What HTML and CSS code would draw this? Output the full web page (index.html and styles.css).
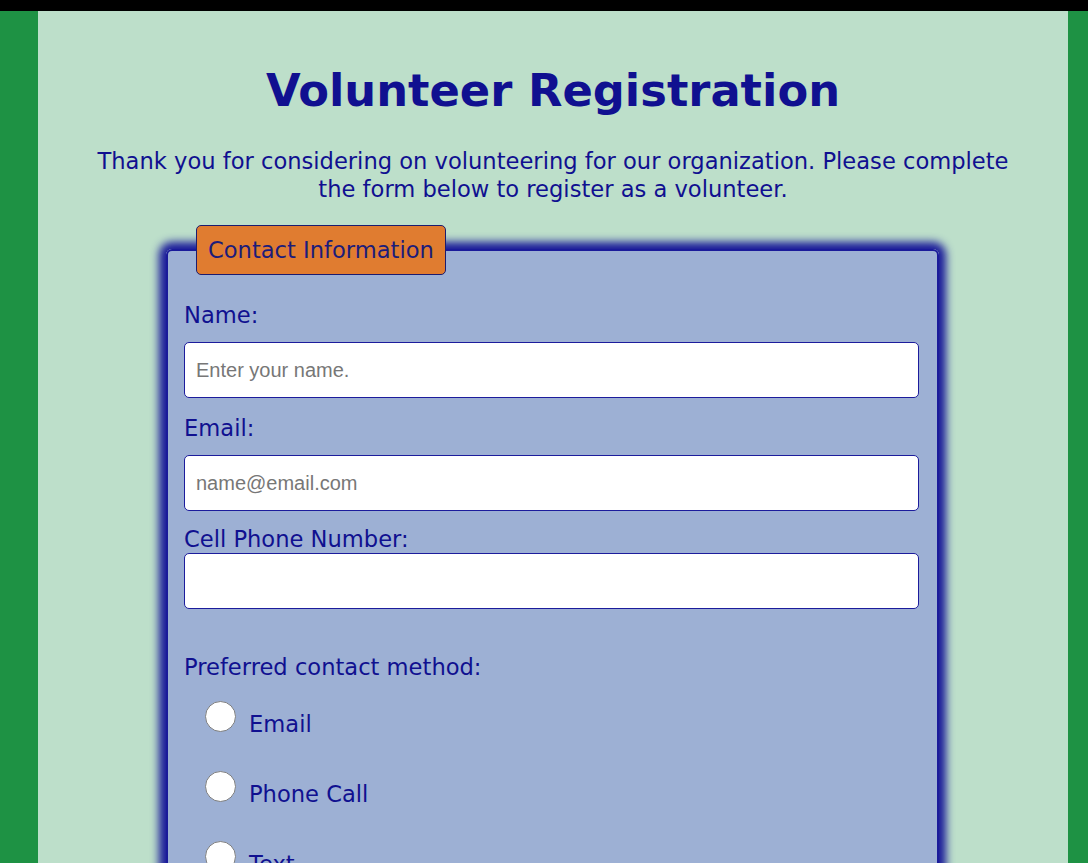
FILE: index.html
```html
<!DOCTYPE html>
<html lang="en">
<head>
<meta charset="utf-8">
<title>Volunteer Registration</title>
<link rel="stylesheet" href="styles.css">
</head>
<body>
<div class="page">
  <h1 class="title">Volunteer Registration</h1>
  <p class="intro">Thank you for considering on volunteering for our organization. Please complete the form below to register as a volunteer.</p>
  <form class="form">
    <fieldset class="card">
      <legend class="card-legend">Contact Information</legend>
      <label class="field-label" for="name">Name:</label>
      <input class="field-input" type="text" id="name" placeholder="Enter your name.">
      <label class="field-label" for="email">Email:</label>
      <input class="field-input" type="email" id="email" placeholder="name@email.com">
      <label class="field-label field-label-tight" for="phone">Cell Phone Number:</label>
      <input class="field-input" type="tel" id="phone">
      <p class="group-label">Preferred contact method:</p>
      <div class="radio-list">
        <label class="radio-row"><input class="radio" type="radio" name="method"><span>Email</span></label>
        <label class="radio-row"><input class="radio" type="radio" name="method"><span>Phone Call</span></label>
        <label class="radio-row"><input class="radio" type="radio" name="method"><span>Text</span></label>
      </div>
    </fieldset>
  </form>
</div>
</body>
</html>
```
FILE: styles.css
```css
html, body {
  margin: 0;
  padding: 0;
}
body {
  background: #1e9244;
  border-top: 11px solid #000;
  font-family: Verdana, "DejaVu Sans", sans-serif;
  color: #101090;
}
.page {
  margin: 0 20px 0 38px;
  background: #bddfca;
  padding: 50px 0 40px;
  min-height: 900px;
}
.title {
  margin: 0;
  text-align: center;
  font-size: 44.8px;
  line-height: 60px;
  font-weight: bold;
  color: #101090;
}
.intro {
  margin: 26px 50px 0;
  text-align: center;
  font-size: 22.6px;
  line-height: 28px;
}
.form {
  margin-top: 22px;
  padding-right: 1px;
}
.card {
  box-sizing: border-box;
  width: 773px;
  margin: 0 auto;
  padding: 0 18px 40px 16px;
  background: #9db0d4;
  border: 2px solid #1a1a9a;
  border-radius: 6px;
  box-shadow: 0 0 8px 7px #1a1a9a;
}
.card-legend {
  margin-left: 12px;
  padding: 10px 11px 10px 11px;
  background: #e07c30;
  border: 1px solid #1c1c6e;
  border-radius: 5px;
  font-size: 22.6px;
  line-height: 28px;
  color: #1c1c7a;
}
.field-label {
  display: block;
  font-size: 22.6px;
  line-height: 28px;
  margin: 16px 0 13px;
}
.field-label:first-of-type {
  margin-top: 26px;
}
.field-label-tight {
  margin: 15px 0 0;
  line-height: 27px;
}
.field-input {
  display: block;
  box-sizing: border-box;
  width: 100%;
  height: 56px;
  margin: 0;
  padding: 0 11px;
  background: #fff;
  border: 1px solid #1c1c9c;
  border-radius: 5px;
  font-family: Arial, "Liberation Sans", sans-serif;
  font-size: 20px;
  color: #333;
}
.field-input::placeholder {
  color: #777;
}
.group-label {
  margin: 44px 0 0;
  font-size: 22.6px;
  line-height: 28px;
}
.radio-list {
  display: flex;
  flex-direction: column;
  gap: 40px;
  margin-top: 20px;
  padding-left: 21px;
}
.radio-row {
  display: flex;
  align-items: flex-start;
  gap: 13px;
  font-size: 22.6px;
  line-height: 28px;
  height: 30px;
}
.radio-row span {
  padding-top: 9px;
}
.radio {
  appearance: none;
  -webkit-appearance: none;
  width: 31px;
  height: 31px;
  margin: 0;
  border: 1px solid #808080;
  border-radius: 50%;
  background: #fff;
  flex: none;
}
```
